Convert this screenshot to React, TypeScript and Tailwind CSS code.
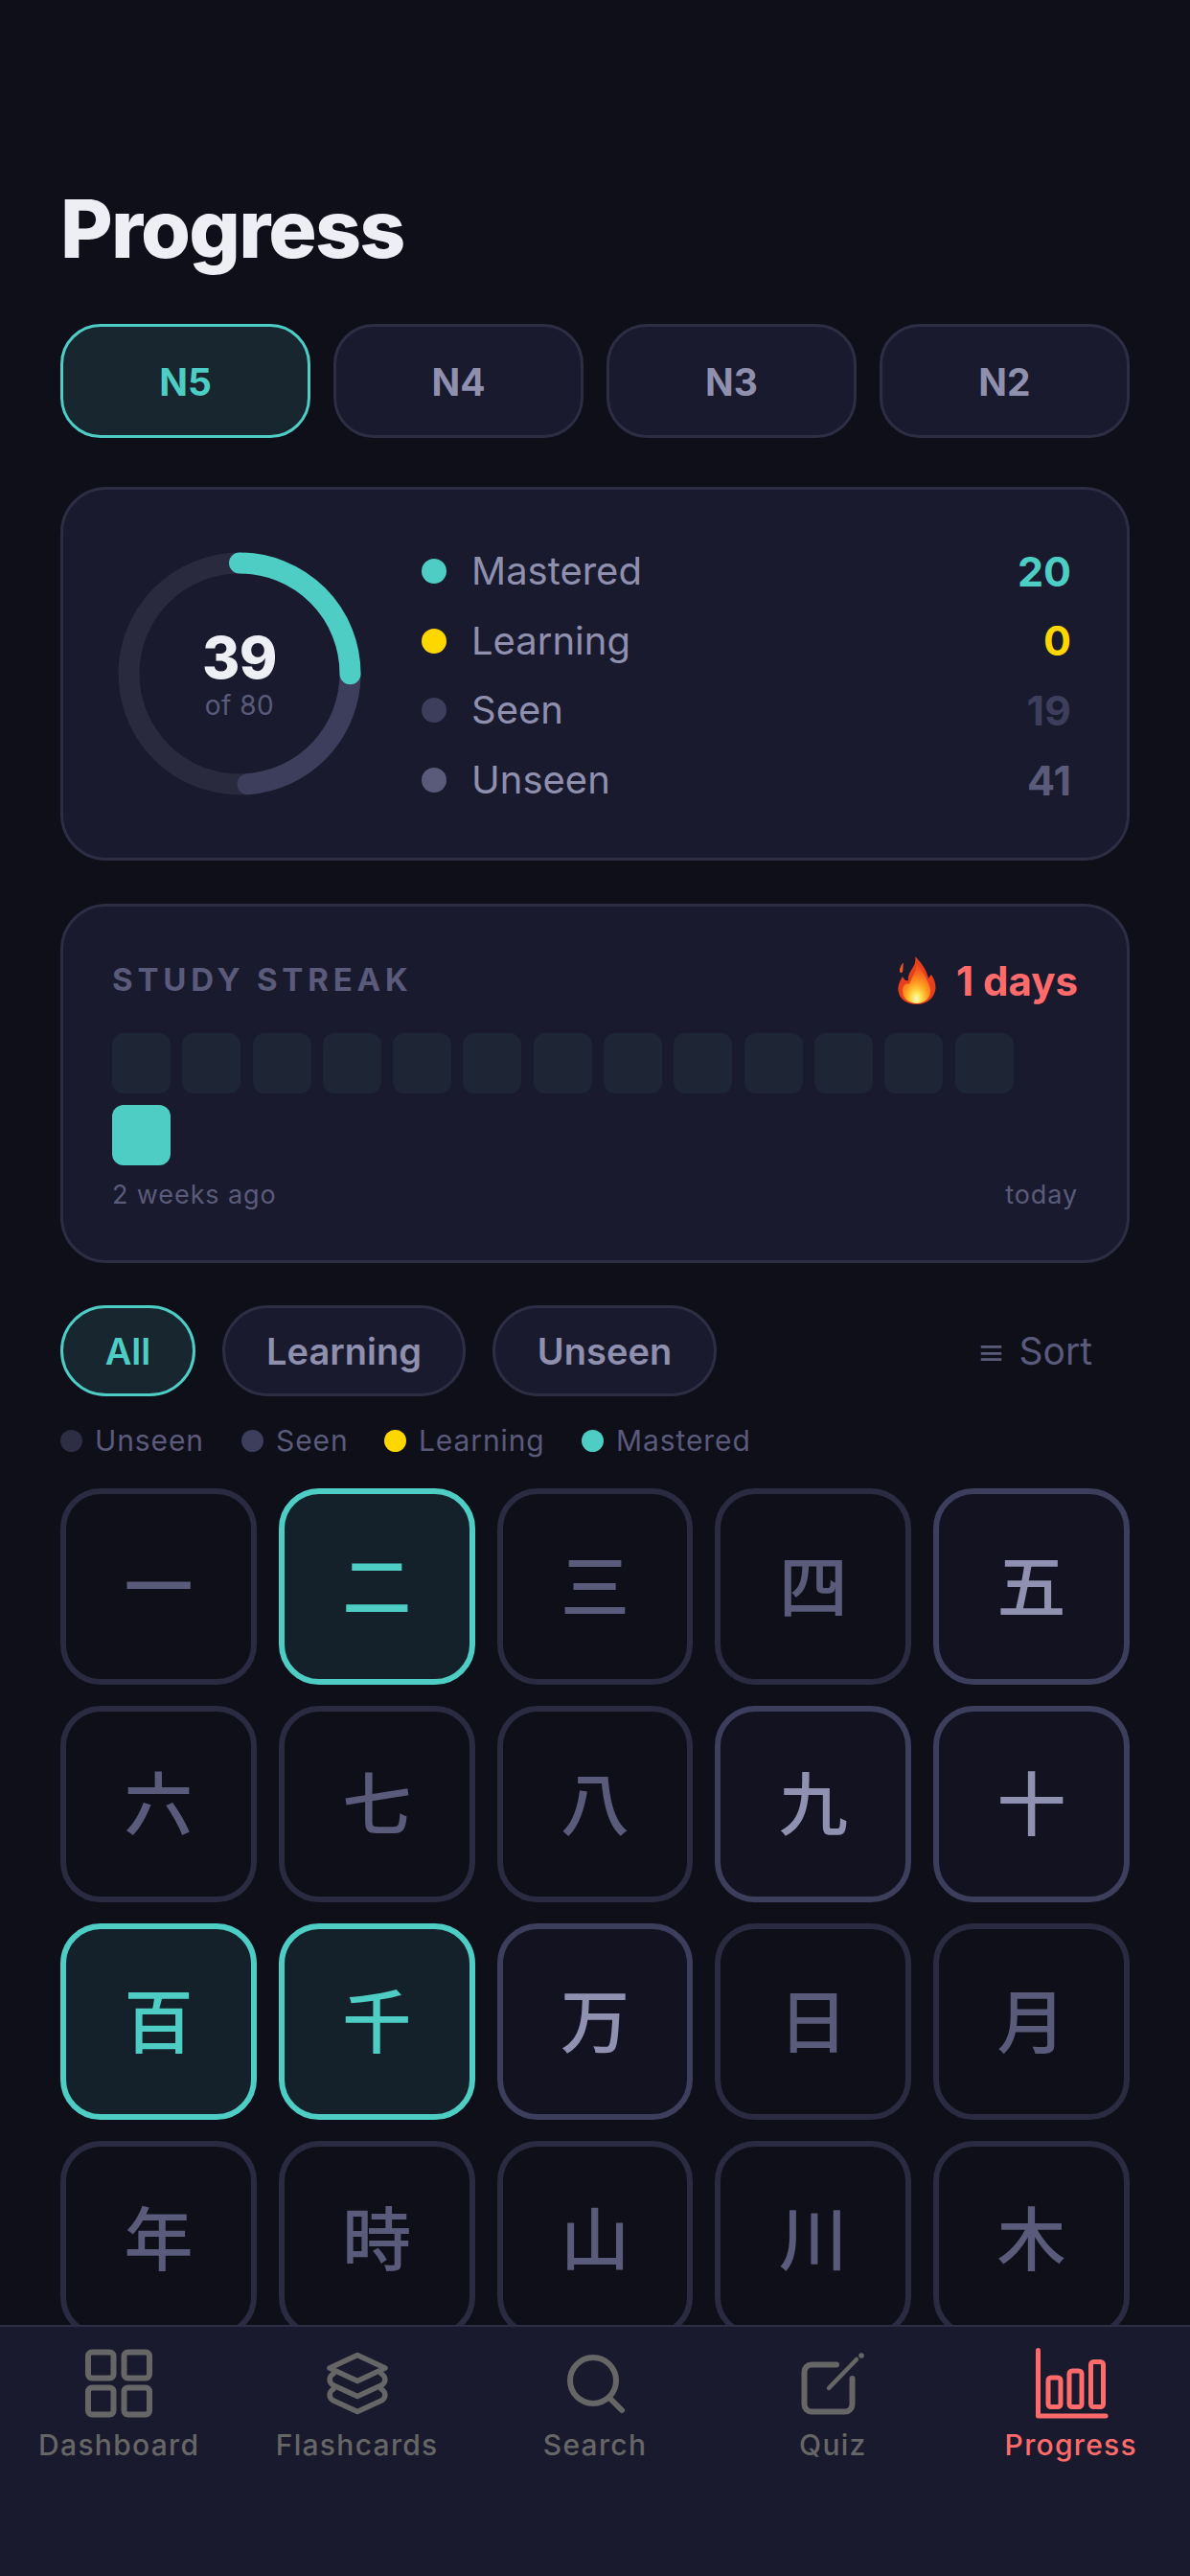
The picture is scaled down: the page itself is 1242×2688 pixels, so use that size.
const levels = ['N5', 'N4', 'N3', 'N2'];

const stats = [
  { label: 'Mastered', value: 20, dot: 'bg-[#4ecdc4]', text: 'text-[#4ecdc4]' },
  { label: 'Learning', value: 0, dot: 'bg-[#ffd700]', text: 'text-[#ffd700]' },
  { label: 'Seen', value: 19, dot: 'bg-[#3d3d5c]', text: 'text-[#3d3d5c]' },
  { label: 'Unseen', value: 41, dot: 'bg-[#5a5a7a]', text: 'text-[#5a5a7a]' },
];

const legend = [
  { label: 'Unseen', dot: 'bg-[#2d2d44]', width: 'w-[189px]' },
  { label: 'Seen', dot: 'bg-[#3d3d5c]', width: 'w-[149px]' },
  { label: 'Learning', dot: 'bg-[#ffd700]', width: 'w-[206px]' },
  { label: 'Mastered', dot: 'bg-[#4ecdc4]', width: 'w-[180px]' },
];

type KanjiState = 'unseen' | 'seen' | 'mastered';

const kanji: [string, KanjiState][] = [
  ['一', 'unseen'], ['二', 'mastered'], ['三', 'unseen'], ['四', 'unseen'], ['五', 'seen'],
  ['六', 'unseen'], ['七', 'unseen'], ['八', 'unseen'], ['九', 'seen'], ['十', 'seen'],
  ['百', 'mastered'], ['千', 'mastered'], ['万', 'seen'], ['日', 'unseen'], ['月', 'unseen'],
  ['年', 'unseen'], ['時', 'unseen'], ['山', 'unseen'], ['川', 'unseen'], ['木', 'unseen'],
];

const kanjiStyles: Record<KanjiState, string> = {
  unseen: 'border-[#2a2a40] bg-[#0f0f1a] text-[#5a5a7a]',
  seen: 'border-[#3d3d5c] bg-[#121220] text-[#9090b0]',
  mastered: 'border-[#4ecdc4] bg-[#14212a] text-[#4ecdc4]',
};

const RING_R = 115.5;
const RING_C = 2 * Math.PI * RING_R;

const Ring = () => (
  <div className="relative w-[254px] h-[254px] shrink-0">
    <svg width="254" height="254" viewBox="0 0 254 254" className="-rotate-90">
      <circle cx="127" cy="127" r={RING_R} fill="none" stroke="#2a2a3e" strokeWidth="22" />
      <circle
        cx="127"
        cy="127"
        r={RING_R}
        fill="none"
        stroke="#3d3d5c"
        strokeWidth="22"
        strokeLinecap="round"
        strokeDasharray={`${RING_C * (19 / 80)} ${RING_C}`}
        strokeDashoffset={-RING_C * 0.25}
      />
      <circle
        cx="127"
        cy="127"
        r={RING_R}
        fill="none"
        stroke="#4ecdc4"
        strokeWidth="22"
        strokeLinecap="round"
        strokeDasharray={`${RING_C * 0.25} ${RING_C}`}
      />
    </svg>
    <div className="absolute inset-0 flex flex-col items-center justify-center">
      <span className="text-[60px] leading-[66px] font-extrabold tracking-[-0.5px] text-[#eeeef5]">39</span>
      <span className="text-[28px] leading-[35px] tracking-[0.5px] text-[#5a5a7a]">of 80</span>
    </div>
  </div>
);

const Flame = () => (
  <svg width="42" height="52" viewBox="0 0 42 52">
    <defs>
      <radialGradient id="flameGlow" cx="0.5" cy="0.88" r="0.75">
        <stop offset="0" stopColor="#fffbd0" />
        <stop offset="0.22" stopColor="#ffe24d" />
        <stop offset="0.55" stopColor="#ff9a1f" />
        <stop offset="1" stopColor="#f4511e" />
      </radialGradient>
    </defs>
    <path
      d="M4 12C5 9 6 8 7 8C6 11 7 14 6 17C5 19 3 18 3 16C3 14 3 14 4 12Z"
      fill="#ee5a24"
    />
    <path
      d="M19 1C26 8 31 15 33 24C34 22 35 21 36 20C40 26 42 33 39 40C36 47 29 51 21 51C12 51 4 47 2 39C0 33 3 27 6 22C8 26 10 27 12 26C11 20 15 16 17 12C19 9 20 5 19 1Z"
      fill="#e8401c"
    />
    <path
      d="M21 9C27 17 33 26 35 35C36 44 29 50 21 50C13 50 6 45 6 37C6 31 10 28 13 30C15 24 20 18 21 9Z"
      fill="url(#flameGlow)"
    />
  </svg>
);

const DashboardIcon = () => (
  <svg width="78" height="78" viewBox="0 0 78 78" fill="none" stroke="currentColor" strokeWidth="6">
    <rect x="7" y="6.5" width="26.5" height="27" rx="4" />
    <rect x="44.5" y="6.5" width="26.5" height="27" rx="4" />
    <rect x="7" y="43.5" width="26.5" height="28" rx="4" />
    <rect x="44.5" y="43.5" width="26.5" height="28" rx="4" />
  </svg>
);

const FlashcardsIcon = () => (
  <svg width="78" height="78" viewBox="0 0 78 78" fill="none" stroke="currentColor" strokeWidth="5.5" strokeLinejoin="round" strokeLinecap="round">
    <path d="M39 9.5L68 23L39 36.5L10 23Z" />
    <path d="M14 29C9 32 9 37 13 40.5L39 52.5L65 40.5C69 37 69 32 64 29" />
    <path d="M14 45C9 48 9 53 13 56.5L39 68.5L65 56.5C69 53 69 48 64 45" />
  </svg>
);

const SearchIcon = () => (
  <svg width="78" height="78" viewBox="0 0 78 78" fill="none" stroke="currentColor" strokeWidth="6" strokeLinecap="round">
    <circle cx="37" cy="36" r="24" />
    <path d="M54 54L67 67" />
  </svg>
);

const QuizIcon = () => (
  <svg width="78" height="78" viewBox="0 0 78 78" fill="none" stroke="currentColor" strokeWidth="6" strokeLinecap="round">
    <path d="M43 19.5H17A7.5 7.5 0 0 0 9.5 27V61A7.5 7.5 0 0 0 17 68.5H52A7.5 7.5 0 0 0 59.5 61V34" />
    <path d="M35 44L64 14" strokeWidth="4.5" />
    <circle cx="69" cy="10" r="2.8" fill="currentColor" stroke="none" />
  </svg>
);

const ProgressIcon = () => (
  <svg width="78" height="78" viewBox="0 0 78 78" fill="none" stroke="currentColor" strokeWidth="5" strokeLinecap="round" strokeLinejoin="round">
    <path d="M4.5 4.5V73H75" />
    <rect x="15" y="33" width="13" height="30.5" rx="3" />
    <rect x="37" y="26" width="13" height="37.5" rx="3" />
    <rect x="59.5" y="16.5" width="13" height="47" rx="3" />
  </svg>
);

const tabs = [
  { label: 'Dashboard', icon: <DashboardIcon /> },
  { label: 'Flashcards', icon: <FlashcardsIcon /> },
  { label: 'Search', icon: <SearchIcon /> },
  { label: 'Quiz', icon: <QuizIcon /> },
  { label: 'Progress', icon: <ProgressIcon />, active: true },
];

const App = () => {
  return (
    <div className="h-[2688px] w-[1242px] flex flex-col overflow-hidden bg-[#0f0f1a] font-['Inter','Noto_Sans_CJK_JP',sans-serif]">
      <main className="flex-1 overflow-hidden px-[63px] pt-[191px]">
        <h1 className="text-[84px] leading-[96px] font-extrabold tracking-[-1.8px] text-[#eeeef5]">Progress</h1>

        <div className="mt-[51px] grid grid-cols-4 gap-[24px]">
          {levels.map((level, i) => (
            <button
              key={level}
              className={`h-[119px] pt-[3px] rounded-[42px] border-[3px] text-[39px] font-bold ${
                i === 0
                  ? 'border-[#4ecdc4] bg-[#18272f] text-[#4ecdc4]'
                  : 'border-[#2d2d44] bg-[#1a1a2e] text-[#8f8fae]'
              }`}
            >
              {level}
            </button>
          ))}
        </div>

        <section className="mt-[51px] h-[390px] rounded-[48px] border-[3px] border-[#2d2d44] bg-[#1a1a2e] pl-[57px] pr-[58px] flex items-center gap-[63px]">
          <Ring />
          <div className="flex-1 flex flex-col gap-[24px] mt-[4px]">
            {stats.map((s) => (
              <div key={s.label} className="h-[48.6px] flex items-center">
                <span className={`w-[26px] h-[26px] rounded-full ${s.dot}`} />
                <span className="ml-[26px] flex-1 text-[40px] text-[#8f8fae]">{s.label}</span>
                <span className={`text-[43px] font-bold ${s.text}`}>{s.value}</span>
              </div>
            ))}
          </div>
        </section>

        <section className="mt-[45px] h-[375px] rounded-[48px] border-[3px] border-[#2d2d44] bg-[#1a1a2e] px-[51px] pt-[51px]">
          <div className="h-[52px] flex items-center justify-between">
            <span className="text-[33px] font-bold tracking-[4.8px] text-[#5a5a7a]">STUDY STREAK</span>
            <span className="flex items-center gap-[20px] text-[42px] font-bold text-[#ff6b6b]">
              <Flame />
              1 days
            </span>
          </div>
          <div className="mt-[29px] flex flex-wrap gap-x-[12.3px] gap-y-[12px]">
            {Array.from({ length: 14 }).map((_, i) => (
              <div key={i} className={`w-[61px] h-[63px] rounded-[12px] ${i === 13 ? 'bg-[#4ecdc4]' : 'bg-[#1e2535]'}`} />
            ))}
          </div>
          <div className="mt-[13px] flex justify-between text-[27px] leading-[36px] tracking-[0.9px] text-[#5a5a7a]">
            <span>2 weeks ago</span>
            <span>today</span>
          </div>
        </section>

        <div className="mt-[44px] h-[95px] flex items-center">
          <button className="w-[141px] h-full pt-[2px] rounded-full border-[3px] border-[#4ecdc4] bg-[#18272f] text-[38px] font-semibold text-[#4ecdc4]">All</button>
          <button className="ml-[28px] w-[254px] h-full pt-[2px] rounded-full border-[3px] border-[#2d2d44] bg-[#1a1a2e] text-[38px] font-semibold text-[#8f8fae]">Learning</button>
          <button className="ml-[28px] w-[234px] h-full pt-[2px] rounded-full border-[3px] border-[#2d2d44] bg-[#1a1a2e] text-[38px] font-semibold text-[#8f8fae]">Unseen</button>
          <span className="ml-auto mr-[39px] pt-[2px] flex items-center gap-[14px] text-[39px] text-[#5a5a7a]">
            <span className="pt-[4px] text-[30px] font-semibold">≡</span>
            Sort
          </span>
        </div>

        <div className="mt-[28px] h-[36px] flex items-center">
          {legend.map((l) => (
            <div key={l.label} className={`flex items-center gap-[13px] ${l.width}`}>
              <span className={`w-[23px] h-[23px] rounded-full ${l.dot}`} />
              <span className="text-[30px] tracking-[0.9px] text-[#5a5a7a]">{l.label}</span>
            </div>
          ))}
        </div>

        <div className="mt-[32px] grid grid-cols-5 gap-x-[23px] gap-y-[22px]">
          {kanji.map(([char, state]) => (
            <div
              key={char}
              className={`h-[205px] flex items-center justify-center rounded-[42px] border-[6px] text-[72px] leading-none font-medium ${kanjiStyles[state]}`}
            >
              {char}
            </div>
          ))}
        </div>
      </main>

      <nav className="h-[262px] shrink-0 border-t-[2px] border-[#2d2d44] bg-[#1a1a2e] pt-[20px] grid grid-cols-5">
        {tabs.map((tab) => (
          <div key={tab.label} className={`flex flex-col items-center ${tab.active ? 'text-[#ff6b6b]' : 'text-[#666666]'}`}>
            {tab.icon}
            <span className="mt-[6px] text-[30px] leading-[38px] font-medium tracking-[1.3px]">{tab.label}</span>
          </div>
        ))}
      </nav>
    </div>
  );
};

export default App;
